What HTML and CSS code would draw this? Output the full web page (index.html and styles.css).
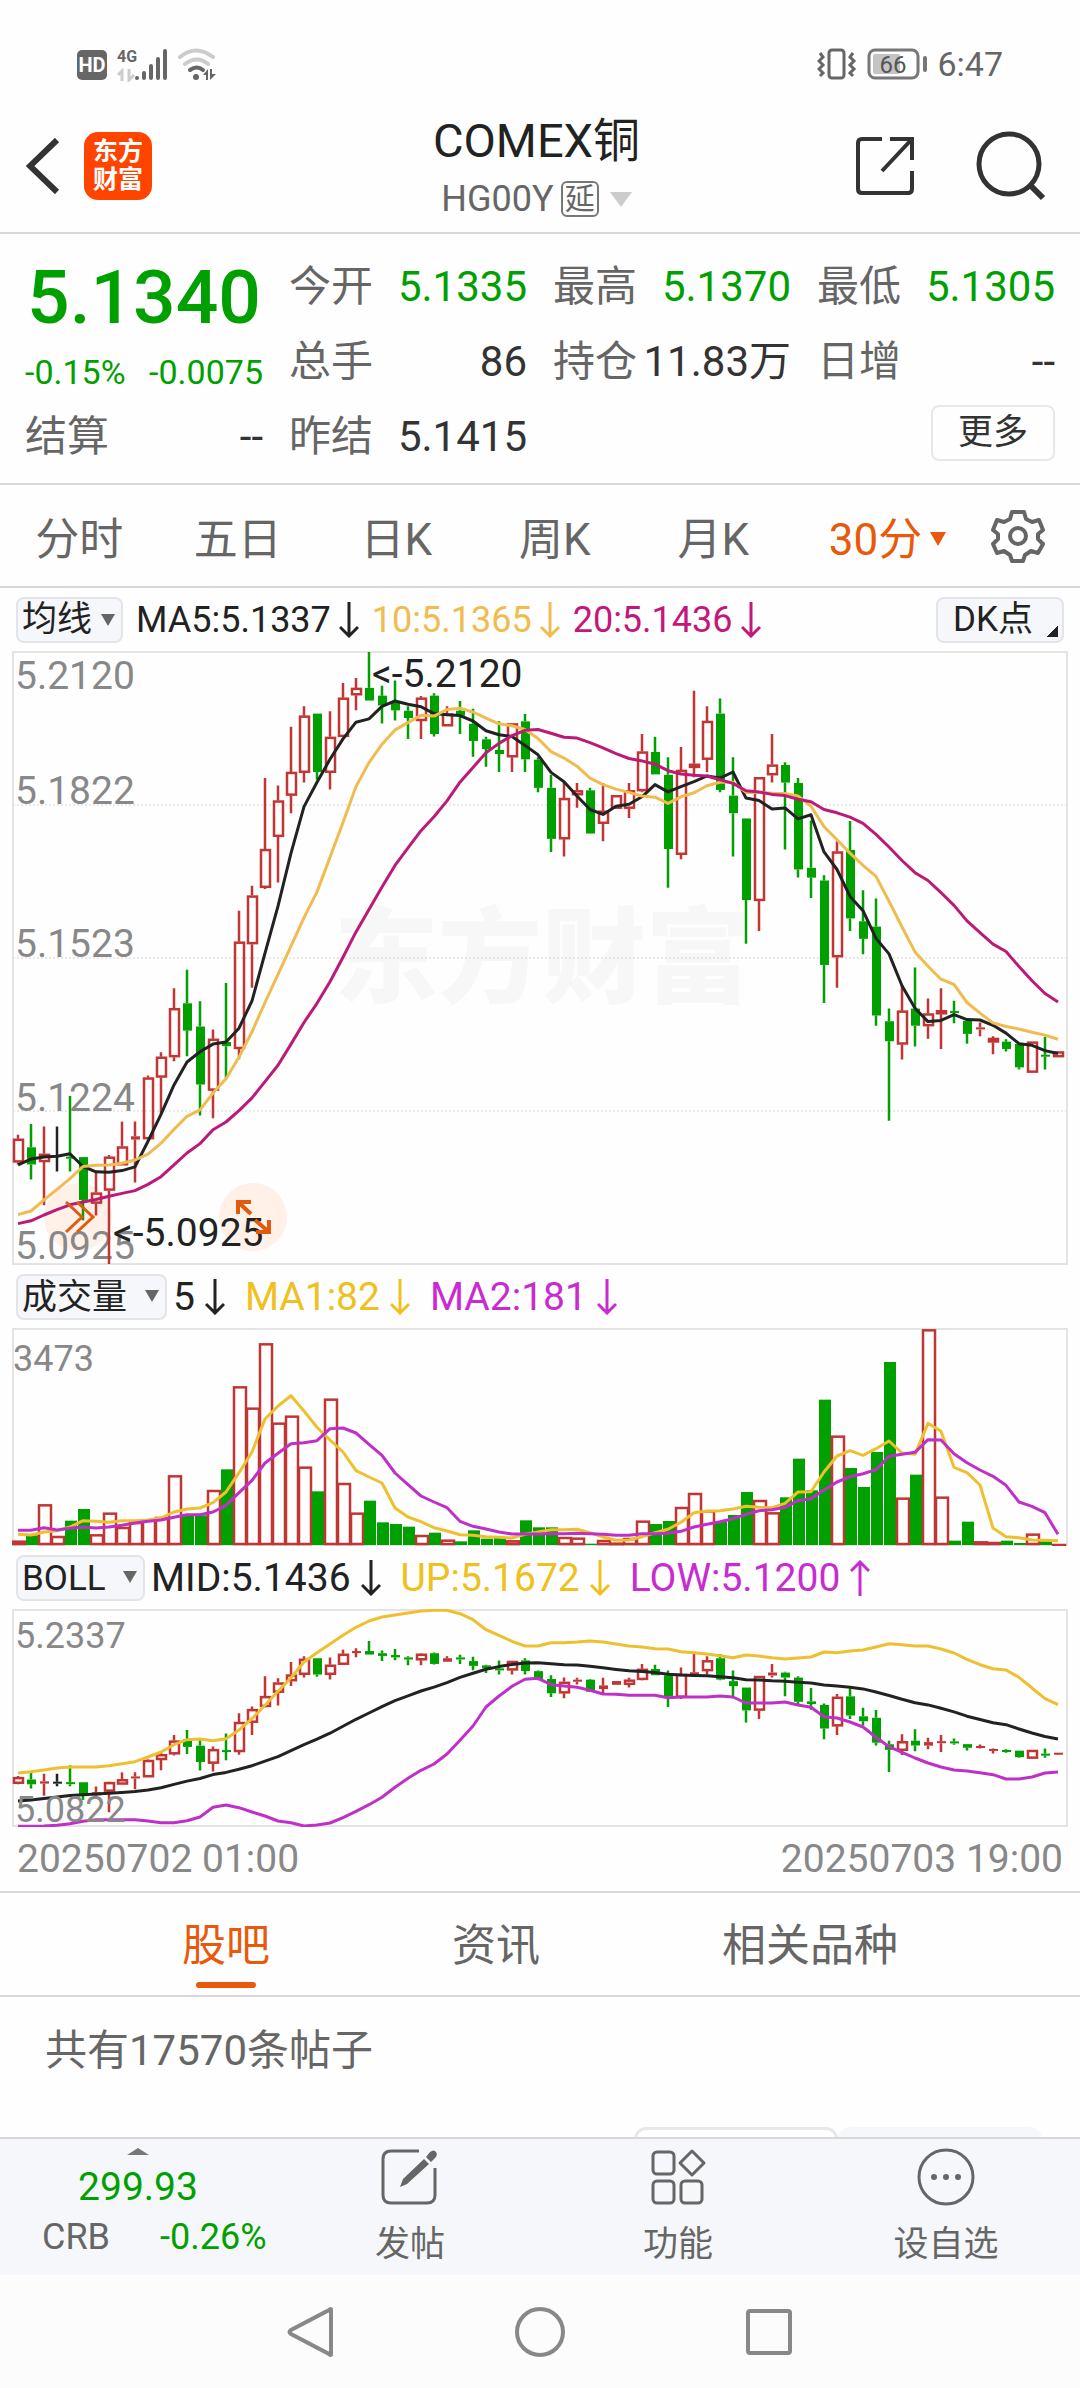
FILE: index.html
```html
<!DOCTYPE html>
<html lang="zh-CN">
<head>
    <meta charset="utf-8">
    <meta name="viewport" content="width=device-width">
    <title>COMEX铜 HG00Y</title>
    <link rel="stylesheet" href="styles.css">
</head>
<body>
    <div class="status-bar">
        <div class="status-group">
            <svg width="98" height="36" viewBox="0 0 98 36">
                <rect x="0" y="4" width="30" height="30" rx="5" fill="#666"/>
                <text x="15" y="26" class="hd">HD</text>
                <text x="40" y="16" class="net">4G</text>
                <path d="M41 29l4-4v10M52 23v11l5-5" fill="none" stroke="#ccc" stroke-width="3"/>
                <path d="M60 32v0M67 32v-5M74 32V20M81 32V13M88 32V5" stroke="#666" stroke-width="4" stroke-linecap="round"/>
            </svg>
            <svg width="42" height="36" viewBox="0 0 42 36">
                <path d="M3 11q16-13 33 0M8 18q12-9 23 0" fill="none" stroke="#ccc" stroke-width="4" stroke-linecap="round"/>
                <path d="M13 24q7-5 13 0" fill="none" stroke="#666" stroke-width="4" stroke-linecap="round"/>
                <circle cx="19" cy="31" r="3" fill="#666"/>
                <path d="M26 29l5-6v11h-2v-5zM33 23v11l6-6h-4v-5z" fill="#666"/>
            </svg>
        </div>
        <div class="status-group">
            <svg width="40" height="34" viewBox="0 0 40 34">
                <rect x="12" y="3" width="15" height="28" rx="3" fill="none" stroke="#666" stroke-width="3"/>
                <path d="M3 6l3 4-4 4 4 4-4 4 4 4-3 3M36 6l-3 4 4 4-4 4 4 4-4 4 3 3" fill="none" stroke="#666" stroke-width="3"/>
            </svg>
            <svg width="60" height="34" viewBox="0 0 60 34">
                <rect x="2" y="3" width="49" height="28" rx="6" fill="none" stroke="#777" stroke-width="3"/>
                <rect x="6" y="7" width="27" height="20" rx="2" fill="#c4c4c4"/>
                <text x="26" y="26" class="battery">66</text>
                <path d="M58 11v12" stroke="#777" stroke-width="4" stroke-linecap="round"/>
            </svg>
            <span class="clock">6:47</span>
        </div>
    </div>

    <header class="header">
        <div class="header-side">
            <button class="icon-btn" aria-label="返回">
                <svg width="34" height="56" viewBox="0 0 34 56"><path d="M31 2L4 28l27 26" fill="none" stroke="#333" stroke-width="6"/></svg>
            </button>
            <a class="logo" href="#"><span>东方</span><span>财富</span></a>
        </div>
        <div class="title">
            <h1>COMEX铜</h1>
            <p>HG00Y<span class="delay">延</span><span class="tri tri-light"></span></p>
        </div>
        <div class="header-side header-right">
            <button class="icon-btn" aria-label="分享">
                <svg width="62" height="62" viewBox="0 0 62 62"><path d="M27 4H7q-4 0-4 4v46q0 4 4 4h46q4 0 4-4V36M35 4h22v21M57 4L27 36" fill="none" stroke="#333" stroke-width="4"/></svg>
            </button>
            <button class="icon-btn" aria-label="搜索">
                <svg width="72" height="72" viewBox="0 0 72 72"><circle cx="34" cy="34" r="30" fill="none" stroke="#333" stroke-width="5"/><path d="M55 55l13 13" stroke="#333" stroke-width="6"/></svg>
            </button>
        </div>
    </header>

    <section class="quote">
        <div class="price">
            <strong>5.1340</strong>
            <div class="change"><span>-0.15%</span><span>-0.0075</span></div>
        </div>
        <div class="stat"><span>今开</span><b class="down">5.1335</b></div>
        <div class="stat"><span>最高</span><b class="down">5.1370</b></div>
        <div class="stat"><span>最低</span><b class="down">5.1305</b></div>
        <div class="stat"><span>总手</span><b>86</b></div>
        <div class="stat"><span>持仓</span><b>11.83万</b></div>
        <div class="stat"><span>日增</span><b>--</b></div>
        <div class="stat"><span>结算</span><b>--</b></div>
        <div class="stat"><span>昨结</span><b>5.1415</b></div>
        <button class="more">更多</button>
    </section>

    <nav class="periods">
        <button>分时</button>
        <button>五日</button>
        <button>日K</button>
        <button>周K</button>
        <button>月K</button>
        <button class="active">30分<span class="tri tri-orange"></span></button>
        <button aria-label="设置">
            <svg width="54" height="54" viewBox="0 0 54 54" fill="none" stroke="#666" stroke-width="4" stroke-linejoin="round">
                <path d="M21 3h12l2 7 6 3 7-2 4 10-5 4v5l5 5-5 9-7-2-6 4-2 6H21l-2-6-6-4-7 2-4-9 5-5v-5l-5-4 4-10 7 2 6-3z"/>
                <circle cx="27" cy="27" r="8"/>
            </svg>
        </button>
    </nav>

    <main class="charts">
        <div class="legend">
            <label class="picker tight"><select aria-label="主图指标"><option>均线</option></select></label>
            <span class="c-black">MA5:5.1337<svg class="arrow"><use href="#down"/></svg></span>
            <span class="c-amber">10:5.1365<svg class="arrow"><use href="#down"/></svg></span>
            <span class="c-magenta">20:5.1436<svg class="arrow"><use href="#down"/></svg></span>
            <button class="dk">DK点</button>
        </div>
        <svg id="kline" class="chart" viewBox="0 0 1056 614"></svg>

        <div class="legend wide">
            <label class="picker"><select aria-label="副图指标一"><option>成交量</option></select></label>
            <span class="c-black">5<svg class="arrow"><use href="#down"/></svg></span>
            <span class="c-yellow">MA1:82<svg class="arrow"><use href="#down"/></svg></span>
            <span class="c-purple">MA2:181<svg class="arrow"><use href="#down"/></svg></span>
        </div>
        <svg id="volume" class="chart" viewBox="0 0 1056 218"></svg>

        <div class="legend wide">
            <label class="picker"><select aria-label="副图指标二"><option>BOLL</option></select></label>
            <span class="c-black">MID:5.1436<svg class="arrow"><use href="#down"/></svg></span>
            <span class="c-yellow">UP:5.1672<svg class="arrow"><use href="#down"/></svg></span>
            <span class="c-purple">LOW:5.1200<svg class="arrow"><use href="#up"/></svg></span>
        </div>
        <svg id="boll" class="chart" viewBox="0 0 1056 218"></svg>
        <div class="dates"><span>20250702 01:00</span><span>20250703 19:00</span></div>
    </main>

    <nav class="tabs">
        <a class="active" href="#">股吧</a>
        <a href="#">资讯</a>
        <a href="#">相关品种</a>
    </nav>

    <section class="posts">
        <p>共有17570条帖子</p>
        <div class="sort"><span class="on"></span><span></span></div>
    </section>

    <footer class="toolbar">
        <div class="index">
            <span class="tri-up"></span>
            <span class="index-value">299.93</span>
            <div class="index-row"><span>CRB</span><span class="down">-0.26%</span></div>
        </div>
        <button>
            <svg width="58" height="58" viewBox="0 0 58 58">
                <path d="M38 3H10q-8 0-8 8v36q0 8 8 8h36q8 0 8-8V20" fill="none" stroke="#666" stroke-width="3"/>
                <path d="M49 4q4-3 6 0t-1 6l-4 4-5-5zM43 11l5 5-22 20-7 3 3-8z" fill="#666"/>
            </svg>
            发帖
        </button>
        <button>
            <svg width="58" height="58" viewBox="0 0 58 58" fill="none" stroke="#666" stroke-width="3">
                <rect x="4" y="4" width="21" height="22" rx="4"/>
                <rect x="4" y="33" width="21" height="22" rx="4"/>
                <rect x="32" y="33" width="21" height="22" rx="4"/>
                <path d="M43 3l12 12-12 12-12-12z" stroke-linejoin="round"/>
            </svg>
            功能
        </button>
        <button>
            <svg width="58" height="58" viewBox="0 0 58 58">
                <circle cx="29" cy="29" r="27" fill="none" stroke="#666" stroke-width="3"/>
                <g fill="#666"><circle cx="17" cy="29" r="3"/><circle cx="29" cy="29" r="3"/><circle cx="41" cy="29" r="3"/></g>
            </svg>
            设自选
        </button>
    </footer>

    <div class="system-nav">
        <button aria-label="返回"><svg width="52" height="52" viewBox="0 0 52 52"><path d="M46 4v44q0 2-2 0L6 28q-3-2 0-4L44 4q2-2 2 0z" fill="none" stroke="#888" stroke-width="4"/></svg></button>
        <button aria-label="主页"><svg width="52" height="52" viewBox="0 0 52 52"><circle cx="26" cy="26" r="23" fill="none" stroke="#888" stroke-width="4"/></svg></button>
        <button aria-label="最近任务"><svg width="52" height="52" viewBox="0 0 52 52"><rect x="5" y="5" width="42" height="42" rx="2" fill="none" stroke="#888" stroke-width="4"/></svg></button>
    </div>

    <svg class="defs">
        <symbol id="down" viewBox="0 0 20 36"><path d="M10 0v34M1 25l9 9 9-9" fill="none" stroke="currentColor" stroke-width="3"/></symbol>
        <symbol id="up" viewBox="0 0 20 36"><path d="M10 36V2M1 11l9-9 9 9" fill="none" stroke="currentColor" stroke-width="3"/></symbol>
    </svg>
    <script src="chart.js"></script>
</body>
</html>
```
FILE: styles.css
```css
* {
    box-sizing: border-box;
}
body {
    margin: 0;
    background: #fefefe;
    color: #333;
    font-family: Roboto, "Noto Sans CJK SC", sans-serif;
}
button, select {
    font-family: inherit;
    color: inherit;
    background: none;
    border: 0;
    padding: 0;
    margin: 0;
}
svg {
    display: block;
}
a {
    color: inherit;
    text-decoration: none;
}
.defs {
    display: none;
}
.down {
    color: #00a000;
}

/* status bar */
.status-bar {
    display: flex;
    justify-content: space-between;
    padding: 46px 77px 0;
    height: 104px;
}
.status-group {
    display: flex;
    align-items: center;
    gap: 2px;
    height: 36px;
}
.status-group svg {
    flex: none;
}
.status-group:last-child {
    gap: 10px;
}
.hd {
    font-size: 20px;
    font-weight: 700;
    fill: #fff;
    text-anchor: middle;
}
.net {
    font-size: 16px;
    font-weight: 700;
    fill: #666;
}
.battery {
    font-size: 24px;
    fill: #555;
    text-anchor: middle;
}
.clock {
    font-size: 34px;
    color: #666;
}

/* header */
.header {
    display: grid;
    grid-template-columns: 1fr auto 1fr;
    align-items: center;
    height: 130px;
    padding: 0 33px 0 26px;
    border-bottom: 2px solid #d8d8d8;
}
.header-side {
    display: flex;
    align-items: center;
    gap: 24px;
    padding-bottom: 4px;
}
.header-right {
    justify-content: flex-end;
    gap: 58px;
}
.logo {
    display: flex;
    flex-direction: column;
    align-items: center;
    justify-content: center;
    width: 68px;
    height: 68px;
    border-radius: 14px;
    background: #ff4400;
    color: #fff;
    font-size: 25px;
    font-weight: 700;
    line-height: 28px;
}
.title {
    text-align: center;
}
.title h1 {
    margin: 0;
    font-size: 47px;
    font-weight: 400;
    line-height: 62px;
    color: #222;
}
.title p {
    display: flex;
    align-items: center;
    justify-content: center;
    gap: 7px;
    margin: 0;
    font-size: 36px;
    line-height: 54px;
    color: #666;
}
.delay {
    border: 2px solid #777;
    border-radius: 6px;
    padding: 0 2px;
    font-size: 30px;
    line-height: 32px;
}
.tri {
    display: inline-block;
    border: 11px solid transparent;
    border-bottom: 0;
    border-top: 15px solid #ccc;
    margin-left: 4px;
}
.tri-orange {
    border-width: 14px 8px 0;
    border-top-color: #e8590c;
    vertical-align: middle;
    margin: 0 0 8px 8px;
}

/* quote */
.quote {
    display: grid;
    grid-template-columns: repeat(4, 1fr);
    grid-auto-rows: 75px;
    column-gap: 26px;
    padding: 14px 25px 10px;
    border-bottom: 2px solid #d8d8d8;
}
.price {
    grid-row: span 2;
    color: #00a000;
}
.price strong {
    display: block;
    font-size: 75px;
    font-weight: 500;
    line-height: 98px;
    text-align: center;
}
.change {
    display: flex;
    justify-content: space-between;
    font-size: 34px;
    line-height: 52px;
}
.stat {
    display: flex;
    justify-content: space-between;
    font-size: 42px;
    line-height: 77px;
    white-space: nowrap;
}
.stat span {
    color: #666;
}
.stat b {
    font-weight: 400;
}
.more {
    grid-column: 4;
    justify-self: end;
    width: 124px;
    height: 56px;
    margin-top: 7px;
    border: 2px solid #e8e8e8;
    border-radius: 8px;
    font-size: 35px;
    line-height: 50px;
}

/* period tabs */
.periods {
    display: grid;
    grid-template-columns: repeat(5, 160fr) 192fr 72fr;
    align-items: center;
    height: 103px;
    padding-right: 26px;
    border-bottom: 2px solid #d8d8d8;
}
.periods button {
    justify-self: center;
    font-size: 44px;
    color: #666;
    white-space: nowrap;
}
.periods .active {
    color: #e8590c;
}

/* charts */
.charts {
    padding: 0 12px;
}
.legend {
    display: flex;
    align-items: center;
    gap: 13px;
    height: 63px;
    padding: 0 4px;
    font-size: 36px;
}
.legend > span {
    display: flex;
    align-items: center;
    gap: 8px;
    white-space: nowrap;
}
.legend.wide {
    gap: 20px;
    font-size: 39px;
}
.legend.wide > span {
    gap: 10px;
}
.legend.wide > .picker {
    margin-right: -14px;
}
.arrow {
    width: 20px;
    height: 36px;
}
.picker {
    position: relative;
}
.picker select {
    appearance: none;
    height: 46px;
    padding: 0 37px 0 4px;
    border: 2px solid #e2e4e8;
    border-radius: 8px;
    background: #f6f7fa;
    font-size: 35px;
    color: #222;
}
.picker::after {
    content: "";
    position: absolute;
    right: 8px;
    top: 17px;
    border: 7px solid transparent;
    border-top: 12px solid #666;
    border-bottom: 0;
}
.picker.tight select {
    padding-right: 28px;
}
.picker.tight::after {
    right: 8px;
}
.dk {
    margin-left: auto;
    width: 128px;
    height: 46px;
    border: 2px solid #e2e4e8;
    border-radius: 8px;
    background: linear-gradient(135deg, transparent 50%, #222 50%) right 4px bottom 4px / 12px 12px no-repeat #f6f7fa;
    padding-right: 14px;
    font-size: 35px;
    line-height: 40px;
    color: #222;
}
.c-black { color: #222; }
.c-amber { color: #f0bc50; }
.c-magenta { color: #c2187c; }
.c-yellow { color: #eec020; }
.c-purple { color: #c82cd0; }
.chart {
    width: 100%;
    height: auto;
}
.frame {
    fill: none;
    stroke: #e4e4e4;
    stroke-width: 2;
}
.grid {
    stroke: #d4d4d4;
    stroke-width: 1;
    stroke-dasharray: 2 2;
}
.watermark {
    fill: #f7f7f7;
    font-size: 104px;
    font-weight: 900;
    text-anchor: middle;
}
.axis {
    fill: #888;
    font-size: 39px;
}
.axis-small {
    fill: #888;
    font-size: 36px;
}
.note {
    fill: #222;
    font-size: 39px;
}
.line {
    fill: none;
    stroke-width: 3;
    stroke-linejoin: round;
}
.dates {
    display: flex;
    justify-content: space-between;
    padding: 0 5px;
    font-size: 39px;
    line-height: 64px;
    color: #888;
}

/* content tabs */
.tabs {
    display: flex;
    justify-content: space-evenly;
    height: 106px;
    border-top: 2px solid #d8d8d8;
    border-bottom: 2px solid #d8d8d8;
    font-size: 44px;
    line-height: 106px;
    color: #666;
}
.tabs .active {
    position: relative;
    color: #e8590c;
}
.tabs .active::after {
    content: "";
    position: absolute;
    left: 14px;
    right: 14px;
    bottom: 7px;
    height: 6px;
    border-radius: 3px;
    background: #e8590c;
}
.posts {
    height: 140px;
    overflow: hidden;
}
.posts p {
    margin: 0;
    padding: 24px 45px 0;
    font-size: 42px;
    line-height: 60px;
    color: #666;
}
.sort {
    display: flex;
    justify-content: flex-end;
    margin: 46px 38px 0;
}
.sort span {
    width: 204px;
    height: 60px;
    border-radius: 12px;
    background: #f6f7fa;
}
.sort .on {
    border: 3px solid #e8e8e8;
    background: #fff;
}

/* bottom toolbar */
.toolbar {
    display: grid;
    grid-template-columns: 276fr 268fr 268fr 268fr;
    height: 138px;
    border-top: 2px solid #d8d8d8;
    background: #f6f7fa;
}
.toolbar button {
    display: flex;
    flex-direction: column;
    align-items: center;
    padding-top: 9px;
    font-size: 35px;
    line-height: 78px;
    color: #666;
}
.index {
    display: flex;
    flex-direction: column;
    align-items: center;
    color: #00a000;
}
.tri-up {
    border: 11px solid transparent;
    border-bottom: 7px solid #777;
    border-top: 0;
    margin: 9px 0 7px;
}
.index-value {
    font-size: 39px;
    line-height: 50px;
}
.index-row {
    display: flex;
    align-self: stretch;
    gap: 50px;
    padding-left: 42px;
    font-size: 36px;
    line-height: 50px;
}
.index-row span:first-child {
    color: #666;
}
.system-nav {
    display: flex;
    justify-content: center;
    gap: 177px;
    padding: 31px 0;
    background: #fcfcfc;
}
```
FILE: chart.js
```javascript
const STEP = 13;
const X0 = 6;
const RED = '#c03634';
const GREEN = '#00a000';

// [direction, high, body top, body bottom, low], in ticks below the top of the scale
const candles = [
    ['r',1210,1220,1278,1283],['g',1184,1241,1283,1320],['r',1190,1257,1277,1383],['k',1190,1260,1260,1300],
    ['g',1115,1264,1268,1300],['g',1265,1265,1370,1420],['r',1303,1352,1379,1408],['r',1260,1264,1347,1527],
    ['r',1178,1239,1285,1285],['r',1178,1214,1222,1327],['r',1065,1070,1221,1221],['r',1008,1019,1070,1160],
    ['r',851,900,1020,1030],['g',806,888,955,1018],['g',883,945,1087,1163],['r',952,975,1102,1170],
    ['g',838,983,993,1073],['r',661,737,1000,1025],['r',600,624,743,850],['r',336,510,605,608],
    ['r',354,391,480,592],['r',210,321,379,422],['r',160,183,323,347],['g',178,178,321,340],
    ['r',172,235,323,364],['r',103,139,235,235],['r',91,115,133,170],['g',27,115,146,146],
    ['g',110,134,158,202],['g',97,150,170,195],['g',160,171,189,240],['r',135,139,196,240],
    ['g',128,134,228,234],['r',160,178,209,209],['g',147,171,183,228],['g',166,203,245,284],
    ['g',235,241,265,308],['g',197,267,277,321],['r',202,202,285,321],['g',179,197,290,321],
    ['g',285,291,360,371],['g',328,360,485,517],['r',347,385,486,528],['r',348,366,378,409],
    ['g',360,366,472,472],['r',348,416,448,491],['r',378,378,411,411],['r',348,366,411,434],
    ['r',228,271,368,371],['g',235,272,327,327],['g',285,328,510,605],['r',260,316,524,535],
    ['r',122,301,311,334],['r',160,196,291,321],['g',141,178,365,371],['g',285,379,422,528],
    ['g',435,435,635,742],['r',334,334,637,711],['r',228,303,329,347],['g',297,304,347,511],
    ['g',336,348,560,580],['g',440,556,580,630],['g',574,587,794,887],['r',491,516,775,850],
    ['g',441,512,680,711],['g',611,687,730,768],['g',631,700,918,943],['g',901,932,981,1176],
    ['r',845,906,989,1026],['g',800,901,943,994],['r',876,913,944,975],['r',851,905,915,1000],
    ['g',882,907,911,937],['g',931,931,963,987],['r',935,947,952,969],['r',969,973,984,1013],
    ['g',976,982,1000,1006],['g',988,988,1045,1050],['r',982,982,1058,1058],['g',970,1014,1018,1050],
    ['r',1006,1006,1020,1020]
];
const ma5 = [1284,1270,1265,1263,1257,1288,1301,1302,1298,1289,1226,1160,1088,1032,1007,988,983,949,882,765,650,520,406,346,290,240,199,191,160,147,155,161,178,181,183,196,220,230,234,256,279,322,345,380,413,425,405,400,382,352,370,357,345,331,336,321,385,391,412,409,436,426,517,560,626,661,729,767,845,900,933,930,916,928,929,942,961,987,991,1004,1011];
const ma10 = [1406,1397,1370,1344,1318,1288,1285,1284,1280,1272,1258,1231,1197,1165,1149,1108,1073,1020,958,886,817,748,678,615,530,445,357,298,253,218,200,182,184,168,165,174,189,203,208,217,239,271,287,307,336,352,363,371,380,383,398,382,372,355,346,346,371,371,373,374,380,405,455,487,520,550,577,638,701,762,797,829,842,886,912,936,945,951,959,966,976];
const ma20 = [1428,1421,1407,1394,1382,1375,1369,1361,1354,1347,1332,1313,1284,1255,1232,1198,1179,1151,1120,1080,1040,988,935,888,835,775,713,658,603,550,507,465,431,392,346,310,274,251,232,219,217,226,236,238,249,262,276,288,294,302,318,326,329,331,340,349,367,370,376,379,388,394,413,421,432,447,474,505,538,568,587,617,648,686,715,743,761,798,833,864,885];

const volumes = [13,29,122,27,73,108,32,97,54,69,76,84,209,92,89,165,227,476,412,605,367,388,235,161,439,186,97,133,68,63,55,30,37,16,11,44,19,21,14,74,53,53,24,22,4,15,7,21,73,63,72,114,156,104,71,90,159,135,98,143,259,164,436,328,231,174,279,549,142,211,647,145,13,70,11,9,13,6,34,11,3];
const vol5 = [32,30,39,43,54,73,71,68,73,73,75,81,99,108,111,127,159,217,279,378,417,448,402,353,315,279,223,204,186,111,84,70,52,42,31,29,25,23,21,32,39,46,46,47,37,24,14,15,25,37,47,68,97,102,103,108,116,113,112,125,159,160,219,267,283,269,289,312,276,272,365,341,233,217,180,51,25,22,15,14,13];
const vol10 = [44,44,52,45,50,54,51,54,59,66,71,75,83,91,91,99,119,157,194,246,275,304,307,313,349,351,336,302,269,216,181,147,129,112,71,56,48,39,33,33,33,34,34,35,34,32,29,29,34,34,35,41,54,62,70,79,92,103,106,113,133,139,165,189,205,214,226,266,272,278,316,315,274,247,225,206,179,129,116,97,32];

const upper = [489,493,498,504,507,507,507,511,517,523,537,552,574,589,591,586,592,618,652,692,734,775,822,850,876,902,926,945,957,963,969,975,977,977,967,949,919,902,884,870,870,880,880,882,885,882,876,870,867,862,861,853,850,846,841,835,843,840,835,831,834,837,852,850,855,858,867,877,874,870,870,861,849,830,814,802,798,776,744,712,694];
const lower = [2,2,3,5,10,17,22,22,22,22,18,13,13,19,30,59,66,58,45,33,18,13,3,6,12,28,47,67,89,119,146,170,189,219,260,303,360,393,422,443,446,427,423,419,410,399,398,395,395,395,388,390,390,390,393,390,372,372,372,375,366,359,331,327,315,300,269,241,224,207,192,180,171,168,163,157,144,144,150,162,165];

function xAt(i) {
    return X0 + i * STEP;
}

function line(values, y, color) {
    const points = values.map((v, i) => xAt(i) + ',' + y(v).toFixed(1)).join(' ');
    return `<polyline class="line" points="${points}" stroke="${color}"/>`;
}

function candle(c, i, y) {
    const [dir, high, top, bottom, low] = c;
    const x = xAt(i);
    const color = { r: RED, g: GREEN, k: '#222' }[dir];
    const t = y(top);
    const h = Math.max(y(bottom) - t, 2);
    let out = `<path d="M${x} ${y(high)}V${t}M${x} ${t + h}V${y(low)}" stroke="${color}" stroke-width="2.5"/>`;
    if (dir === 'r' && h > 4) {
        out += `<rect x="${x - 4}" y="${t + 1}" width="9" height="${h - 2}" fill="none" stroke="${color}" stroke-width="2.5"/>`;
    } else {
        out += `<rect x="${x - 4}" y="${t}" width="9" height="${h}" fill="${color}"/>`;
    }
    return out;
}

function frame(h) {
    return `<rect class="frame" x="1" y="1" width="1054" height="${h}"/>`;
}

function drawKline() {
    const y = v => 1 + (v - 27) * 612 / 1500;
    let out = '<text class="watermark" x="530" y="344">东方财富</text>';
    [154, 307, 460].forEach(g => {
        out += `<line class="grid" x1="1" x2="1055" y1="${g}" y2="${g}"/>`;
    });
    out += frame(612);
    out += '<circle cx="66" cy="566" r="34" fill="#fff0e8"/><circle cx="241" cy="566" r="34" fill="#fff0e8"/>';
    out += '<text class="axis" x="3" y="38">5.2120</text><text class="axis" x="3" y="153">5.1822</text>';
    out += '<text class="axis" x="3" y="306">5.1523</text><text class="axis" x="3" y="460">5.1224</text>';
    out += '<text class="axis" x="3" y="608">5.0925</text>';
    candles.forEach((c, i) => { out += candle(c, i, y); });
    out += line(ma5, y, '#222') + line(ma10, y, '#f0bc50') + line(ma20, y, '#bc1a78');
    out += '<text class="note" x="360" y="36">&lt;-5.2120</text><text class="note" x="101" y="595">&lt;-5.0925</text>';
    out += '<path d="M54 551l16 15-16 15M65 551l16 15-16 15" fill="none" stroke="#e05a10" stroke-width="3"/>';
    out += '<path d="M226 563v-12h13M226 551l13 12M257 569v12h-13M257 581l-14-12" fill="none" stroke="#e05a10" stroke-width="4"/>';
    document.getElementById('kline').innerHTML = out;
}

function drawVolume() {
    const y = v => 217 - v / 3;
    let out = frame(216) + '<text class="axis-small" x="1" y="43">3473</text>';
    volumes.forEach((v, i) => {
        const x = xAt(i);
        if (candles[i][0] === 'g') {
            out += `<rect x="${x - 5}" y="${y(v)}" width="12" height="${v / 3}" fill="${GREEN}"/>`;
        } else {
            out += `<rect x="${x - 5}" y="${y(v) + 1}" width="12" height="${Math.max(v / 3 - 2, 0.5)}" fill="none" stroke="${RED}" stroke-width="2.5"/>`;
        }
    });
    out += line(vol5, y, '#eec030') + line(vol10, y, '#c030c8');
    document.getElementById('volume').innerHTML = out;
}

function drawBoll() {
    // candle ticks mapped onto the wider 5.0822 - 5.2337 band
    const price = v => 1 + (93 + (v - 27) * 0.3423) / 3;
    let out = frame(216);
    candles.forEach((c, i) => { out += candle(c, i, price); });
    out += line(ma20, price, '#222');
    out += line(upper, v => 1 + (978 - v) / 3, '#eec030');
    out += line(lower, v => 1 + (651 - v) / 3, '#c030c8');
    out += '<text class="axis-small" x="3" y="39">5.2337</text><text class="axis-small" x="3" y="213">5.0822</text>';
    document.getElementById('boll').innerHTML = out;
}

drawKline();
drawVolume();
drawBoll();
```
